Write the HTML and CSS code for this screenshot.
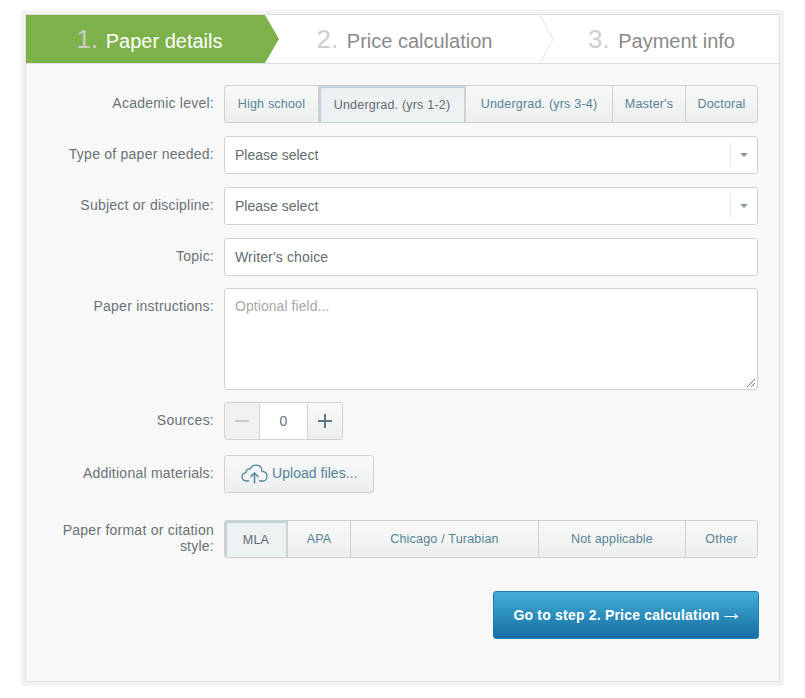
FILE: index.html
```html
<!DOCTYPE html>
<html lang="en">
<head>
<meta charset="utf-8">
<title>Paper details</title>
<link rel="stylesheet" href="styles.css">
</head>
<body>
<div class="frame">
  <div class="panel">
    <div class="steps">
      <div class="step step-active"><span class="num">1.</span> Paper details</div>
      <div class="step step-mid"><span class="num">2.</span> Price calculation
        <svg class="chev" width="16" height="48" viewBox="0 0 16 48"><path d="M1 0 L14 24 L1 48" fill="none" stroke="#e2e2e2"/></svg>
      </div>
      <div class="step step-last"><span class="num">3.</span> Payment info</div>
    </div>
    <form class="form">
      <div class="row r-level">
        <div class="label">Academic level:</div>
        <div class="seg">
          <div class="opt w94">High school</div>
          <div class="opt on w147">Undergrad. (yrs 1-2)</div>
          <div class="opt w147">Undergrad. (yrs 3-4)</div>
          <div class="opt w73">Master's</div>
          <div class="opt last">Doctoral</div>
        </div>
      </div>
      <div class="row r-sel">
        <div class="label">Type of paper needed:</div>
        <div class="field select"><span class="grow">Please select</span><span class="sep"></span><span class="caret"></span></div>
      </div>
      <div class="row r-sel">
        <div class="label">Subject or discipline:</div>
        <div class="field select"><span class="grow">Please select</span><span class="sep"></span><span class="caret"></span></div>
      </div>
      <div class="row r-topic">
        <div class="label">Topic:</div>
        <div class="field topic">Writer's choice</div>
      </div>
      <div class="row r-area">
        <div class="label">Paper instructions:</div>
        <div class="field area">Optional field...
          <svg class="grip" width="10" height="10" viewBox="0 0 10 10"><path d="M1 9 L9 1 M5 9 L9 5" stroke="#777" fill="none"/></svg>
        </div>
      </div>
      <div class="row r-src">
        <div class="label">Sources:</div>
        <div class="stepper">
          <div class="st-btn st-minus"><svg width="16" height="16" viewBox="0 0 16 16"><path d="M1 8 H15" stroke="#c4c8ca" stroke-width="2"/></svg></div>
          <div class="st-val">0</div>
          <div class="st-btn st-plus"><svg width="16" height="16" viewBox="0 0 16 16"><path d="M1 8 H15 M8 1 V15" stroke="#5f7686" stroke-width="2"/></svg></div>
        </div>
      </div>
      <div class="row r-up">
        <div class="label">Additional materials:</div>
        <div class="upload">
          <svg width="27" height="20" viewBox="0 0 27 20"><path d="M8 17 H5.5 C2.5 17 1 15 1 12.8 C1 10.5 2.6 9 4.8 8.8 C5 5.8 7 4.5 9 5 C10.4 2.4 12.8 1 15.5 1.2 C19 1.4 21 4 21 7.4 C24 7.6 26 9.6 26 12.4 C26 15 24 17 21.5 17 H18" fill="none" stroke="#53859c" stroke-width="1.3"/><path d="M13.5 19.5 V9.5 M9.5 13 L13.5 9 L17.5 13" fill="none" stroke="#53859c" stroke-width="1.5"/></svg>
          <span class="up-text">Upload files...</span>
        </div>
      </div>
      <div class="row r-fmt">
        <div class="label label-wrap">Paper format or citation style:</div>
        <div class="seg">
          <div class="opt on w63">MLA</div>
          <div class="opt w63">APA</div>
          <div class="opt w188">Chicago / Turabian</div>
          <div class="opt w147">Not applicable</div>
          <div class="opt last">Other</div>
        </div>
      </div>
      <div class="actions">
        <div class="next"><span>Go to step 2. Price calculation</span><span class="arrow">→</span></div>
      </div>
    </form>
  </div>
</div>
</body>
</html>
```
FILE: styles.css
```css
* { box-sizing: border-box; }
html, body { margin: 0; padding: 0; background: #fff; }
body { font-family: "Liberation Sans", Arial, sans-serif; color: #5c666b; }
.frame {
  width: 763px; height: 676px; margin: 10px 0 0 21px;
  border: 4px solid #f3f3f3; border-radius: 3px;
}
.panel { height: 100%; border: 1px solid #dedede; background: #f8f8f8; }
.steps { display: flex; height: 49px; background: #fff; border-bottom: 1px solid #dedede; }
.step {
  height: 48px; font-size: 20px; line-height: 48px; color: #8a8a8a;
  text-align: center; position: relative; white-space: nowrap;
}
.num { font-size: 26px; color: #cfcfcf; margin-right: 3px; }
.step-active {
  width: 253px; background: #7db24a; color: #fff;
  clip-path: polygon(0 0, 239px 0, 253px 24px, 239px 48px, 0 48px);
  padding-right: 6px;
}
.step-active .num { color: #c9cfc4; margin-right: 2px; }
.step-mid { width: 275px; padding-right: 26px; padding-left: 2px; }
.chev { position: absolute; right: -1px; top: 0; }
.step-last { flex: 1; padding-right: 10px; }
.form { padding: 21px 21px 0 0; }
.row { display: flex; }
.label {
  width: 188px; margin-right: 10px; flex: none; text-align: right;
  font-size: 14px; line-height: 16px; color: #697276; padding-top: 10px; letter-spacing: 0.24px;
}
.r-sel, .r-topic { margin-top: 13px; }
.r-area { margin-top: 12px; }
.r-src { margin-top: 12px; }
.r-up { margin-top: 15px; }
.r-fmt { margin-top: 27px; }
.r-fmt .label { padding-top: 2px; }
.label-wrap { padding-left: 30px; }
.seg {
  display: flex; height: 38px; width: 534px; border-radius: 3px;
  border: 1px solid #d0d2d2; background: linear-gradient(#f8f8f8, #edefef);
}
.opt {
  height: 36px; flex: none; text-align: center; font-size: 12.5px; line-height: 36px;
  color: #568397; border-right: 1px solid #d0d2d2; white-space: nowrap; letter-spacing: 0.2px;
}
.opt.last { flex: 1; border-right: 0; }
.opt.on {
  color: #626c71; background: #edf1f2; line-height: 38px;
  box-shadow: inset 2px 2px 1px #bfd0da, inset -1px 0 0 #c9d6de;
}
.w94 { width: 94px; }
.w147 { width: 147px; }
.w73 { width: 73px; }
.w63 { width: 63px; }
.w188 { width: 188px; }
.field {
  width: 534px; height: 38px; background: #fff; border: 1px solid #d0d2d2; border-radius: 3px;
  font-size: 14px; line-height: 36px; padding-left: 10px; color: #626c71;
}
.topic { letter-spacing: 0.14px; }
.select { display: flex; align-items: center; padding-right: 0; }
.grow { flex: 1; }
.sep { width: 1px; height: 24px; background: #ececec; }
.caret {
  width: 26px; height: 4px; position: relative;
}
.caret::after {
  content: ""; position: absolute; left: 9px; top: 0;
  border-left: 4px solid transparent; border-right: 4px solid transparent; border-top: 4px solid #8c9ba3;
}
.area { height: 102px; line-height: 20px; padding-top: 7px; color: #a8a8a8; position: relative; letter-spacing: 0.06px; }
.grip { position: absolute; right: 1px; bottom: 1px; }
.stepper {
  display: flex; width: 119px; height: 38px; border: 1px solid #d0d2d2; border-radius: 3px; overflow: hidden;
}
.st-btn { display: flex; align-items: center; justify-content: center; }
.st-minus { width: 34px; background: #f0f0f0; }
.st-val {
  width: 49px; background: #fff; text-align: center; font-size: 14px; line-height: 36px; color: #6a7277;
  border-left: 1px solid #d0d2d2; border-right: 1px solid #d0d2d2;
}
.st-plus { flex: 1; background: linear-gradient(#f8f8f8, #edefef); }
.upload {
  display: flex; align-items: center; width: 150px; height: 38px; padding: 0 0 0 16px; gap: 4px;
  border: 1px solid #d0d2d2; border-radius: 3px; background: linear-gradient(#f8f8f8, #edefef);
  font-size: 14px; color: #568397;
}
.up-text { padding-bottom: 2px; letter-spacing: 0.05px; }
.actions { display: flex; justify-content: flex-end; margin: 33px -1px 0 0; }
.next {
  width: 266px; height: 48px; border: 1px solid #1f7fae; border-radius: 3px;
  background: linear-gradient(#42aed8, #176ea2); color: #fff; font-size: 14px; font-weight: bold;
  text-align: center; line-height: 46px; letter-spacing: 0.2px; white-space: nowrap; padding-left: 4px;
}
.arrow { font-size: 23px; font-weight: normal; line-height: 0; letter-spacing: 0; }
```
